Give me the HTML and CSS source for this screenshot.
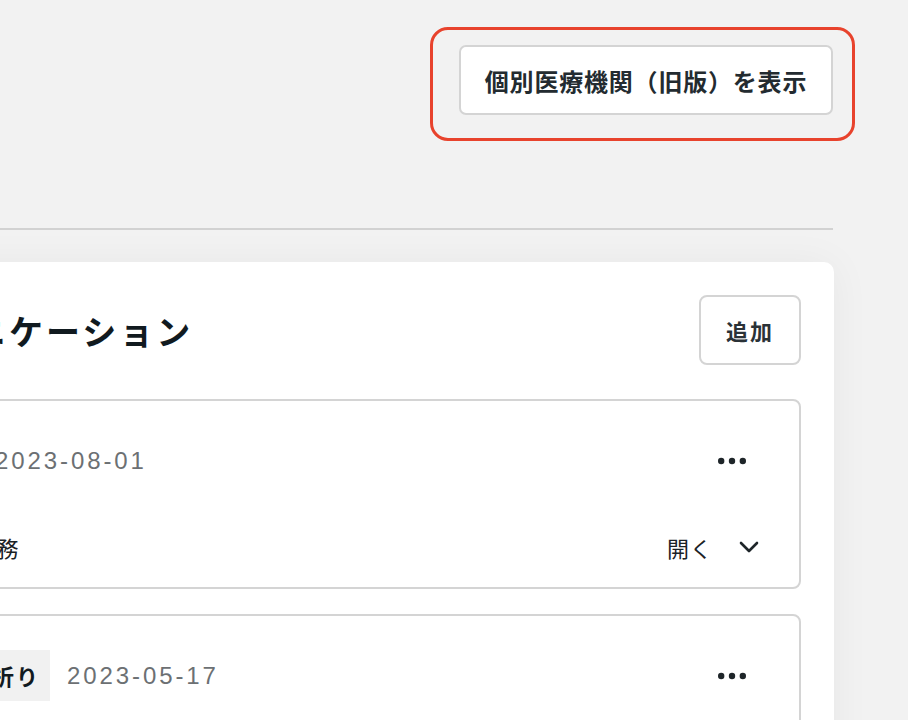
FILE: index.html
```html
<!DOCTYPE html>
<html lang="ja">
<head>
<meta charset="utf-8">
<title>コミュニケーション</title>
<link rel="stylesheet" href="styles.css">
</head>
<body>
<div class="page">
  <header class="top">
    <div class="highlight-wrap">
      <button class="btn-legacy" type="button">個別医療機関（旧版）を表示</button>
      <span class="annotation" aria-hidden="true"></span>
    </div>
  </header>
  <hr class="divider">
  <section class="panel">
    <div class="panel-head">
      <h2 class="panel-title">コミュニケーション</h2>
      <button class="btn-add" type="button">追加</button>
    </div>
    <div class="entries">
      <article class="entry">
        <div class="entry-top">
          <span class="tag">初診</span>
          <span class="date">2023-08-01</span>
          <span class="more" aria-label="その他">
            <svg width="28" height="8" viewBox="0 0 28 8"><circle cx="3.2" cy="4" r="3.2"/><circle cx="14" cy="4" r="3.2"/><circle cx="24.8" cy="4" r="3.2"/></svg>
          </span>
        </div>
        <div class="entry-bottom">
          <span class="summary">通常の業務</span>
          <span class="toggle">開く
            <svg class="chev" width="22" height="14" viewBox="0 0 22 14"><path d="M3 3 L11 11 L19 3"/></svg>
          </span>
        </div>
      </article>
      <article class="entry">
        <div class="entry-top">
          <span class="tag">電話の折り</span>
          <span class="date">2023-05-17</span>
          <span class="more" aria-label="その他">
            <svg width="28" height="8" viewBox="0 0 28 8"><circle cx="3.2" cy="4" r="3.2"/><circle cx="14" cy="4" r="3.2"/><circle cx="24.8" cy="4" r="3.2"/></svg>
          </span>
        </div>
        <div class="entry-bottom">
          <span class="summary">患者様へ折り返し連絡</span>
          <span class="toggle">開く
            <svg class="chev" width="22" height="14" viewBox="0 0 22 14"><path d="M3 3 L11 11 L19 3"/></svg>
          </span>
        </div>
      </article>
    </div>
  </section>
</div>
</body>
</html>
```

FILE: styles.css
```css
html, body {
  margin: 0;
  padding: 0;
  background: #f2f2f2;
  overflow: hidden;
  height: 100%;
}

body {
  font-family: "Noto Sans CJK JP", "Noto Sans", sans-serif;
  color: #1b2226;
}

.page {
  margin-left: -163px;
  padding-right: 74px;
}

.top {
  display: flex;
  justify-content: flex-end;
  padding-top: 45px;
  padding-right: 1px;
}

.highlight-wrap {
  position: relative;
}

.btn-legacy {
  display: block;
  width: 374px;
  height: 70px;
  background: #fff;
  border: 2px solid #d4d4d4;
  border-radius: 7px;
  font-family: "Noto Sans CJK JP", sans-serif;
  font-weight: 700;
  font-size: 24px;
  letter-spacing: 0.8px;
  color: #232b30;
  padding: 0;
}

.annotation {
  position: absolute;
  left: -29px;
  top: -18px;
  right: -22px;
  bottom: -26px;
  border: 3.5px solid #e8432d;
  border-radius: 18px;
  pointer-events: none;
}

.divider {
  border: 0;
  height: 2px;
  background: #d2d2d2;
  margin: 113px 1px 32px 0;
}

.panel {
  background: #fff;
  border-radius: 10px;
  padding: 33px 33px 40px 24px;
  min-height: 600px;
  box-shadow: 0 2px 40px rgba(0, 0, 0, 0.05);
}

.panel-head {
  display: flex;
  justify-content: space-between;
  align-items: center;
}

.panel-title {
  margin: 0;
  font-size: 34px;
  font-weight: 700;
  letter-spacing: 3px;
  color: #111a1f;
}

.btn-add {
  width: 102px;
  height: 70px;
  background: #fff;
  border: 2px solid #d4d4d4;
  border-radius: 8px;
  font-family: "Noto Sans CJK JP", sans-serif;
  font-weight: 700;
  font-size: 22px;
  letter-spacing: 2px;
  color: #2a3237;
  padding: 0;
}

.entries {
  margin-top: 34px;
  display: flex;
  flex-direction: column;
  gap: 25px;
}

.entry {
  border: 2px solid #d4d4d4;
  border-radius: 8px;
  padding: 34px 39px 25px 47px;
}

.entry-top {
  display: flex;
  align-items: center;
  height: 51px;
  gap: 17px;
}

.tag {
  background: #f1f1f1;
  height: 51px;
  line-height: 51px;
  padding: 0 10px;
  font-size: 22px;
  font-weight: 700;
  letter-spacing: 2px;
  color: #111a1f;
}

.date {
  font-family: "Liberation Sans", Arial, sans-serif;
  font-size: 24px;
  letter-spacing: 2.9px;
  color: #6c7073;
}

.more {
  margin-left: auto;
  margin-right: 14px;
  display: flex;
  align-items: center;
}

.more svg {
  fill: #1e2529;
}

.entry-bottom {
  margin-top: 46px;
  display: flex;
  justify-content: space-between;
  align-items: center;
  height: 30px;
}

.summary,
.toggle {
  font-size: 22px;
  letter-spacing: 1px;
  color: #1b2226;
}

.summary {
  letter-spacing: -0.4px;
}

.toggle {
  display: flex;
  align-items: center;
  gap: 25px;
}

.chev {
  fill: none;
  stroke: #1e2529;
  stroke-width: 2.6;
  stroke-linecap: round;
  stroke-linejoin: round;
}
```
